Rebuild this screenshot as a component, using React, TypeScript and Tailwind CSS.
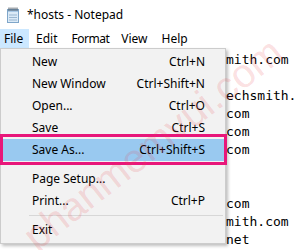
import React from "react";

const items: (
  | { label: string; shortcut?: string; hl?: boolean }
  | "sep"
)[] = [
  { label: "New", shortcut: "Ctrl+N" },
  { label: "New Window", shortcut: "Ctrl+Shift+N" },
  { label: "Open...", shortcut: "Ctrl+O" },
  { label: "Save", shortcut: "Ctrl+S" },
  { label: "Save As...", shortcut: "Ctrl+Shift+S", hl: true },
  "sep",
  { label: "Page Setup..." },
  { label: "Print...", shortcut: "Ctrl+P" },
  "sep",
  { label: "Exit" },
];

const lines = [
  "mith.com",
  "",
  "echsmith.",
  "com",
  "com",
  "com",
  "",
  "",
  "com",
  "mith.com",
  "net",
];

function NotepadIcon() {
  return (
    <svg width="14" height="16" viewBox="0 0 14 16">
      <rect x="1.5" y="2.5" width="11" height="13" fill="#dbeaf7" stroke="#7fa6c9" />
      <rect x="2" y="3" width="10" height="2" fill="#a9c9e6" />
      <line x1="3" y1="8" x2="11" y2="8" stroke="#9bb7d1" />
      <line x1="3" y1="10.5" x2="11" y2="10.5" stroke="#9bb7d1" />
      <line x1="3" y1="13" x2="11" y2="13" stroke="#9bb7d1" />
      {[3, 5, 7, 9, 11].map((x) => (
        <rect key={x} x={x - 0.5} y="0.5" width="1" height="3.5" fill="#4f5b66" />
      ))}
    </svg>
  );
}

export default function App() {
  return (
    <div
      className="relative w-[296px] h-[250px] overflow-hidden bg-white text-black"
      style={{ fontFamily: '"Noto Sans", sans-serif' }}
    >
      {/* Title bar */}
      <div className="h-[29px] flex items-center pl-[6px] gap-[7px]">
        <NotepadIcon />
        <span className="text-[12px] leading-none">*hosts - Notepad</span>
      </div>
      {/* Menu bar */}
      <div className="h-[19px] flex items-center text-[12px]">
        <div className="h-full px-[4px] flex items-center bg-[#cce8ff] w-[29px]">File</div>
        <div className="ml-[7px]">Edit</div>
        <div className="ml-[14px] tracking-[-0.5px]">Format</div>
        <div className="ml-[12px]">View</div>
        <div className="ml-[14px]">Help</div>
      </div>
      {/* Text area */}
      <div
        className="pl-[226px] pt-[3px] text-[13px] leading-[18px]"
        style={{ fontFamily: '"DejaVu Sans Mono", monospace' }}
      >
        {lines.map((l, i) => (
          <div key={i} className="h-[18px] whitespace-pre">
            {l}
          </div>
        ))}
      </div>

      {/* Dropdown menu */}
      <div className="absolute left-0 top-[48px] w-[226px] bg-[#f2f2f2] border border-[#cccccc] py-[2px] text-[12px] shadow-[2px_2px_3px_rgba(0,0,0,0.25)]">
        {items.map((it, i) =>
          it === "sep" ? (
            <div key={i} className="h-[7px] flex items-center pl-[28px] pr-[2px]">
              <div className="h-px w-full bg-[#d7d7d7]" />
            </div>
          ) : (
            <div
              key={i}
              className={`h-[22px] flex items-center pl-[31px] pr-[20px] ${
                it.hl ? "bg-[#99c9f0]" : ""
              }`}
            >
              <span className="flex-1">{it.label}</span>
              {it.shortcut && <span>{it.shortcut}</span>}
            </div>
          )
        )}
      </div>

      {/* Pink highlight box */}
      <div className="absolute left-0 top-[134px] w-[227px] h-[31px] border-[3px] border-[#e8177a]" />

      {/* Watermark */}
      <div
        className="absolute left-[-8px] top-[116px] w-[340px] text-[40px] leading-none text-[rgba(235,70,80,0.18)] pointer-events-none whitespace-nowrap"
        style={{ transform: "rotate(-38deg)", fontFamily: '"Liberation Sans", sans-serif' }}
      >
        phanmemvui.com
      </div>
    </div>
  );
}
